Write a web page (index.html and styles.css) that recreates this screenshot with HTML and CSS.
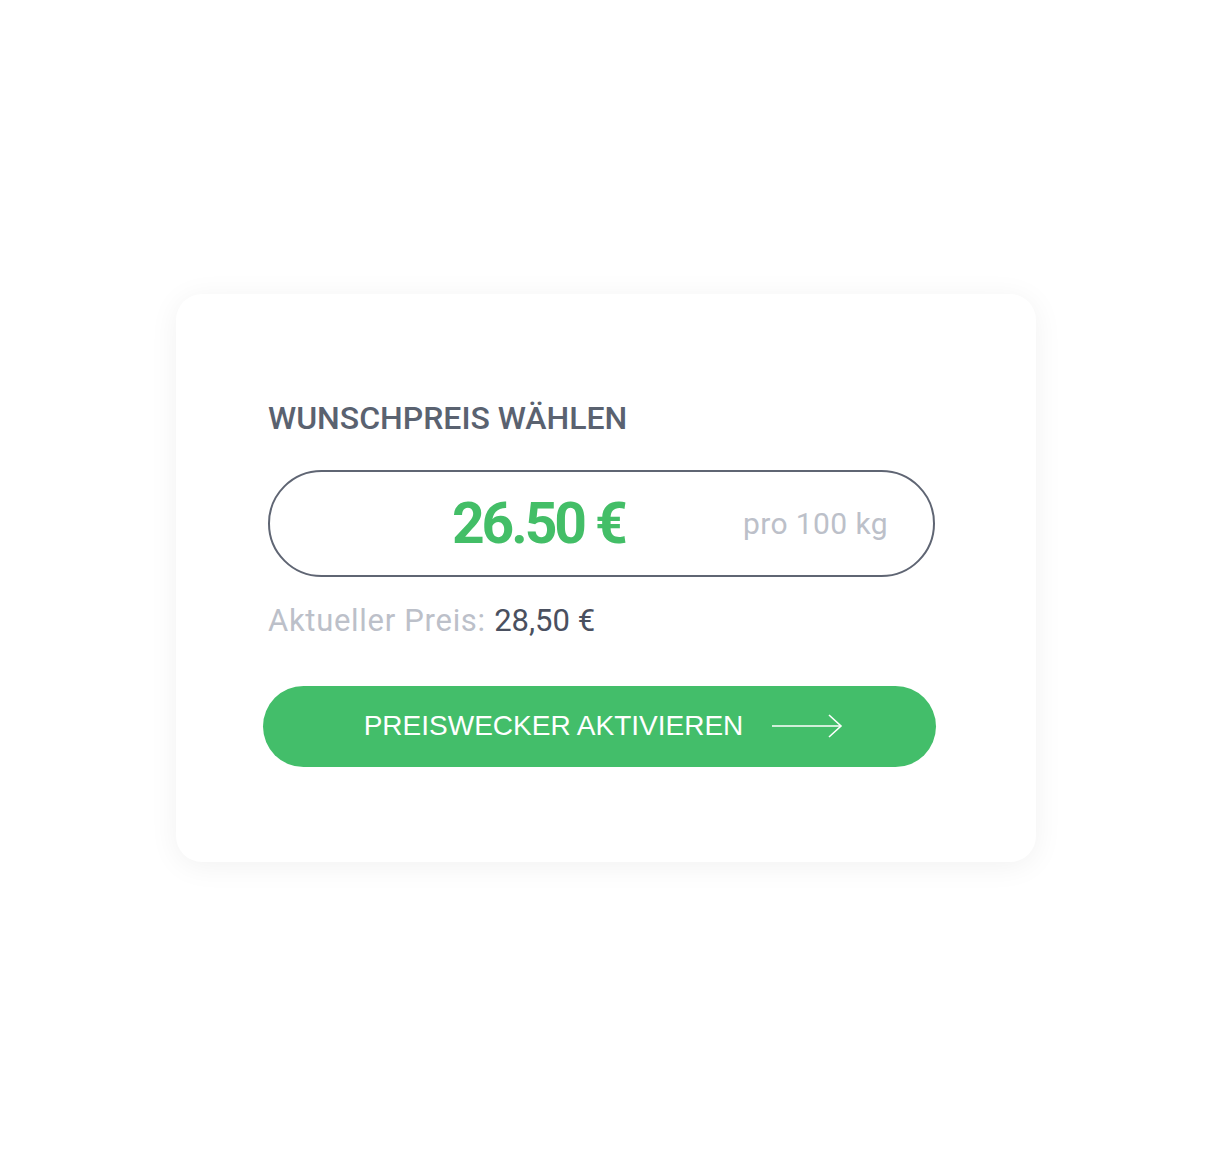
FILE: index.html
```html
<!DOCTYPE html>
<html lang="de">
<head>
    <meta charset="UTF-8">
    <meta name="viewport" content="width=device-width, initial-scale=1.0">
    <title>Preiswecker</title>
    <link rel="stylesheet" href="styles.css">
</head>
<body>
    <div class="card">
        <h2 class="title">WUNSCHPREIS WÄHLEN</h2>

        <div class="price-field">
            <span class="price-value">26.50 €</span>
            <span class="price-unit">pro 100 kg</span>
        </div>

        <p class="current">Aktueller Preis: <span class="current-value">28,50 €</span></p>

        <button type="button" class="activate">
            PREISWECKER AKTIVIEREN
            <svg class="arrow" width="72" height="26" viewBox="0 0 72 26" fill="none" stroke="#ffffff" stroke-width="1.6">
                <path d="M1 13H70"/>
                <path d="M58 2L70 13L58 24"/>
            </svg>
        </button>
    </div>
</body>
</html>
```

FILE: styles.css
```css
html,
body {
    height: 100%;
}

body {
    margin: 0;
    background-color: #ffffff;
    font-family: Roboto, "Noto Sans", sans-serif;
    display: flex;
    align-items: center;
    justify-content: center;
}

.card {
    width: 860px;
    height: 568px;
    box-sizing: border-box;
    padding: 106px 101px 0 92px;
    background: #ffffff;
    border-radius: 26px;
    box-shadow: 0 4px 30px rgba(0, 0, 0, 0.06);
}

.title {
    margin: 0;
    font-weight: 500;
    font-size: 32px;
    line-height: 36px;
    letter-spacing: 0;
    color: #5a6270;
}

.price-field {
    margin-top: 34px;
    height: 107px;
    box-sizing: border-box;
    border: 2px solid #5f6573;
    border-radius: 54px;
    display: flex;
    align-items: center;
    padding: 0 45px 0 182px;
}

.price-value {
    flex: 1;
    font-weight: 700;
    font-size: 57px;
    color: #43be67;
    letter-spacing: -3.1px;
}

.price-unit {
    font-size: 30px;
    color: #bcc0c9;
    letter-spacing: 0.4px;
}

.current {
    margin: 24px 0 0;
    font-size: 31px;
    line-height: 40px;
    color: #bcc0c9;
    letter-spacing: 0.7px;
}

.current-value {
    color: #4a5060;
    letter-spacing: 0;
}

.activate {
    margin: 45px 0 0 -5px;
    width: 673px;
    height: 81px;
    border: none;
    border-radius: 41px;
    background-color: #43be6a;
    color: #ffffff;
    font-family: "Liberation Sans", Arial, sans-serif;
    font-size: 28px;
    display: flex;
    align-items: center;
    justify-content: center;
    gap: 28px;
    padding: 0 0 0 8px;
    cursor: pointer;
}

.arrow {
    display: block;
}
```
